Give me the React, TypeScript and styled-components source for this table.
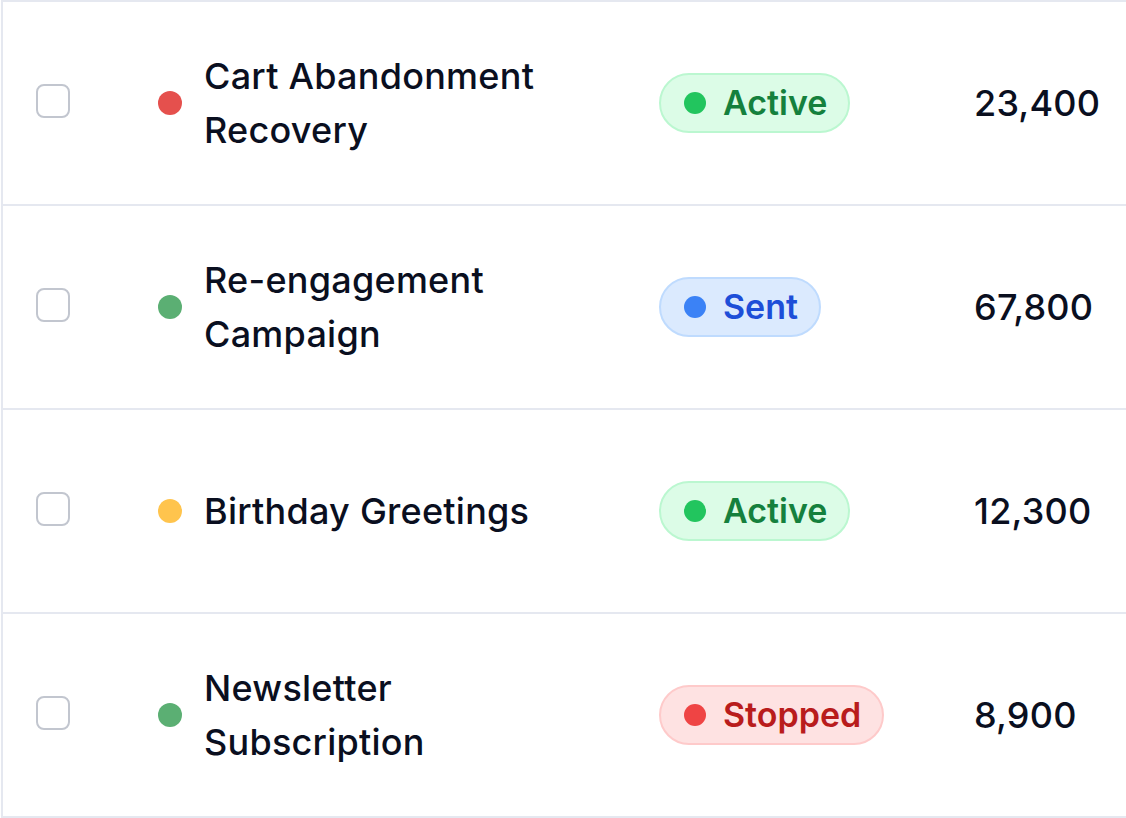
import React from 'react';
import styled, { createGlobalStyle } from 'styled-components';

const GlobalStyle = createGlobalStyle`
    html, body {
        margin: 0;
        padding: 0;
        background: #ffffff;
        overflow: hidden;
    }
    body {
        font-family: Inter, "Noto Sans", "Liberation Sans", sans-serif;
        color: #0a0f1f;
    }
`

const Table = styled.div`
    width: 1300px;
    margin-left: 1px;
    border-top: 2px solid #e5e8f0;
    border-left: 2px solid #e5e8f0;
`

const Row = styled.div`
    display: grid;
    grid-template-columns: 111px 497px 317px 1fr;
    height: 202px;
    border-bottom: 2px solid #e5e8f0;
`

const Cell = styled.div`
    display: flex;
    align-items: center;
    min-width: 0;
`

const CheckCell = styled(Cell)`
    padding-left: 33px;
`

const Checkbox = styled.span`
    display: block;
    width: 30px;
    height: 30px;
    border: 2px solid #c2c6cf;
    border-radius: 8px;
    background: #ffffff;
    margin-top: -4px;
`

const NameCell = styled(Cell)`
    padding-left: 44px;
    gap: 22px;
`

const Dot = styled.span<{ $color: string; $size: number }>`
    flex: none;
    width: ${p => p.$size}px;
    height: ${p => p.$size}px;
    border-radius: 50%;
    background: ${p => p.$color};
`

const Name = styled.span`
    font-size: 36px;
    line-height: 54px;
    font-weight: 500;
    letter-spacing: 0.25px;
    max-width: 360px;
`

const StatusCell = styled(Cell)`
    padding-left: 48px;
`

const Badge = styled.span<{ $bg: string; $border: string; $fg: string }>`
    display: inline-flex;
    align-items: center;
    gap: 17px;
    height: 56px;
    padding: 0 21px 0 23px;
    border-radius: 30px;
    border: 2px solid ${p => p.$border};
    background: ${p => p.$bg};
    color: ${p => p.$fg};
    font-size: 34px;
    font-weight: 600;
    line-height: 1;
`

const NumberCell = styled(Cell)`
    padding-left: 46px;
    font-size: 36px;
    font-weight: 500;
    letter-spacing: 0.2px;
`

type Status = 'Active' | 'Sent' | 'Stopped';

const statusColors: Record<Status, { bg: string; border: string; fg: string; dot: string }> = {
    Active: { bg: '#dcfce7', border: '#bbf7d0', fg: '#15803d', dot: '#22c55e' },
    Sent: { bg: '#dbeafe', border: '#bfdbfe', fg: '#1d4ed8', dot: '#3b82f6' },
    Stopped: { bg: '#fee2e2', border: '#fecaca', fg: '#b91c1c', dot: '#ef4444' },
};

interface Campaign {
    name: string;
    color: string;
    status: Status;
    count: string;
}

const campaigns: Campaign[] = [
    { name: 'Cart Abandonment Recovery', color: '#e5504d', status: 'Active', count: '23,400' },
    { name: 'Re-engagement Campaign', color: '#5baf73', status: 'Sent', count: '67,800' },
    { name: 'Birthday Greetings', color: '#ffc44d', status: 'Active', count: '12,300' },
    { name: 'Newsletter Subscription', color: '#5baf73', status: 'Stopped', count: '8,900' },
];

const StatusBadge: React.FC<{ status: Status }> = ({ status }) => {
    const c = statusColors[status];
    return (
        <Badge $bg={c.bg} $border={c.border} $fg={c.fg}>
            <Dot $color={c.dot} $size={22} />
            {status}
        </Badge>
    )
}

export default function App() {
    return (
        <>
            <GlobalStyle />
            <Table>
                {campaigns.map(c => (
                    <Row key={c.name}>
                        <CheckCell>
                            <Checkbox />
                        </CheckCell>
                        <NameCell>
                            <Dot $color={c.color} $size={24} />
                            <Name>{c.name}</Name>
                        </NameCell>
                        <StatusCell>
                            <StatusBadge status={c.status} />
                        </StatusCell>
                        <NumberCell>{c.count}</NumberCell>
                    </Row>
                ))}
            </Table>
        </>
    )
}
